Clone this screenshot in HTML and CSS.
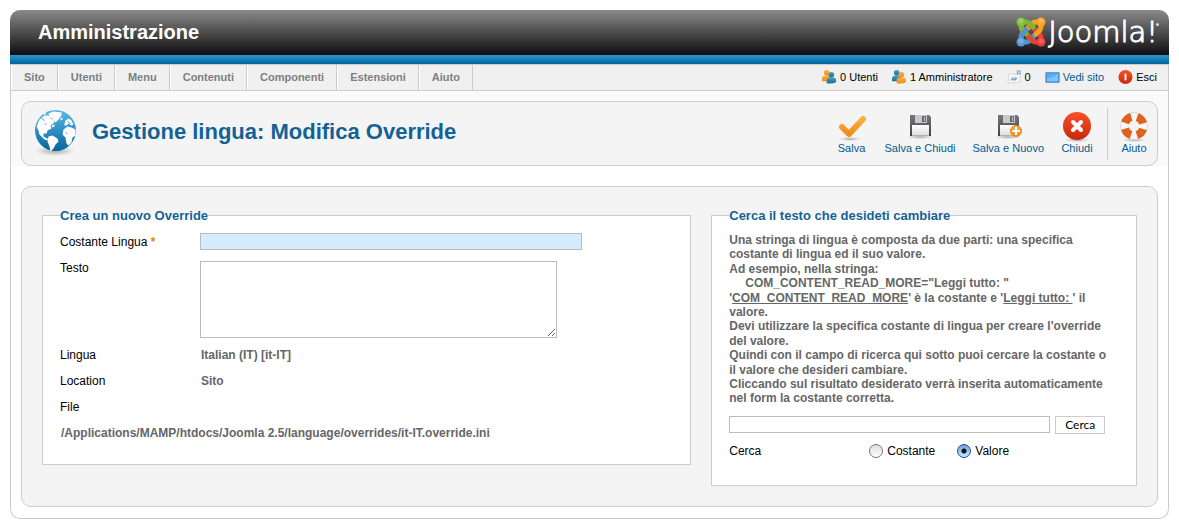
FILE: index.html
```html
<!DOCTYPE html>
<html lang="it">
<head>
<meta charset="utf-8">
<title>Amministrazione - Gestione lingua</title>
<link rel="stylesheet" href="styles.css">
</head>
<body>
<svg class="defs" aria-hidden="true">
  <defs>
    <linearGradient id="sea" x1="0" y1="0" x2="0" y2="1"><stop offset="0" stop-color="#5bb8ea"/><stop offset="1" stop-color="#04659c"/></linearGradient>
    <linearGradient id="gold" x1="0" y1="0" x2="0" y2="1"><stop offset="0" stop-color="#fbb040"/><stop offset="1" stop-color="#f08c1a"/></linearGradient>
    <linearGradient id="teal" x1="0" y1="0" x2="0" y2="1"><stop offset="0" stop-color="#4aa3c4"/><stop offset="1" stop-color="#176a8e"/></linearGradient>
    <linearGradient id="red" x1="0" y1="0" x2="0" y2="1"><stop offset="0" stop-color="#f8502a"/><stop offset="1" stop-color="#c8290c"/></linearGradient>
    <linearGradient id="steel" x1="0" y1="0" x2="0" y2="1"><stop offset="0" stop-color="#77777b"/><stop offset="1" stop-color="#434347"/></linearGradient>
    <linearGradient id="paper" x1="0" y1="0" x2="0" y2="1"><stop offset="0" stop-color="#ffffff"/><stop offset="1" stop-color="#dcdcdc"/></linearGradient>
    <radialGradient id="shade"><stop offset="0" stop-color="#000" stop-opacity=".3"/><stop offset="1" stop-color="#000" stop-opacity="0"/></radialGradient>
    <symbol id="disk" viewBox="0 0 32 32">
      <ellipse cx="16" cy="27" rx="13" ry="2" fill="url(#shade)"/>
      <path d="M6 5h19l2 2v19H6z" fill="url(#steel)"/>
      <path d="M11 5h12v8H11z" fill="#c9c9cb"/>
      <path d="M18 6h4v6h-4z" fill="#6b6b6e"/>
      <path d="M20 7h1v4h-1z" fill="#c5c5c8"/>
      <path d="M8 15h17v11H8z" fill="url(#paper)"/>
      <path d="M8 25h17v1H8z" fill="#b5b5b5"/>
    </symbol>
  </defs>
</svg>
<div class="frame">
  <header class="masthead">
    <h1 class="site-title">Amministrazione</h1>
    <div class="brand">
      <svg class="brand-mark" viewBox="0 0 30 30" aria-hidden="true">
        <g fill="none" stroke-width="5" stroke-linecap="round" stroke-linejoin="round">
          <path d="M5 5V9Q5 12 7 14L16 22" stroke="#7ab929"/>
          <path d="M25 5H20Q17 5 15 8L6 17" stroke="#f9a01e"/>
          <path d="M25 25V21Q25 18 23 16L14 8" stroke="#ee4136"/>
          <path d="M5 25H10Q13 25 15 22L23 14" stroke="#4f93d2"/>
          <path d="M5 24V20Q5 18 7 16L10 13" stroke="#4f93d2"/>
          <path d="M25 6V10Q25 12 23 14L20 17" stroke="#f9a01e"/>
          <path d="M6 5H10Q12 5 14 7L17 10" stroke="#7ab929"/>
          <path d="M24 25H20Q18 25 16 23L13 20" stroke="#ee4136"/>
        </g>
        <circle cx="5" cy="5" r="4.5" fill="#83c03a"/>
        <circle cx="25" cy="5" r="4.5" fill="#fba42a"/>
        <circle cx="25" cy="25" r="4.5" fill="#ee3d36"/>
        <circle cx="5" cy="25" r="4.5" fill="#5a9bd8"/>
        <g fill="#fff" opacity=".2"><circle cx="5" cy="4" r="2.5"/><circle cx="25" cy="4" r="2.5"/><circle cx="25" cy="24" r="2.5"/><circle cx="5" cy="24" r="2.5"/></g>
      </svg>
      <span class="brand-name">Joomla!</span><span class="brand-dot"></span>
    </div>
  </header>
  <div class="menubar">
    <nav class="menu">
      <a href="#">Sito</a><a href="#">Utenti</a><a href="#">Menu</a><a href="#">Contenuti</a><a href="#">Componenti</a><a href="#">Estensioni</a><a href="#">Aiuto</a>
    </nav>
    <div class="status">
      <span class="status-item">
        <svg viewBox="0 0 16 16" aria-hidden="true"><circle cx="5" cy="3" r="3" fill="url(#gold)"/><path d="M0 12V9q0-3 3-3h4q3 0 3 3v3z" fill="url(#gold)"/><circle cx="10" cy="5" r="3" fill="url(#teal)"/><path d="M5 14v-3q0-3 3-3h4q3 0 3 3v2q-4 2-10 1z" fill="url(#teal)"/></svg>
        0 Utenti</span>
      <span class="status-item">
        <svg viewBox="0 0 16 16" aria-hidden="true"><circle cx="5" cy="3" r="3" fill="url(#teal)"/><path d="M0 12V9q0-3 3-3h4q3 0 3 3v3z" fill="url(#teal)"/><circle cx="10" cy="5" r="3" fill="url(#gold)"/><path d="M5 14v-3q0-3 3-3h4q3 0 3 3v2q-4 2-10 1z" fill="url(#gold)"/></svg>
        1 Amministratore</span>
      <span class="status-item">
        <svg viewBox="0 0 16 16" aria-hidden="true"><path d="M2 4l10 1 2-1v9l-13 1z" fill="#f8f8f8" stroke="#d4d4d4"/><path d="M4 8l5-1 2 3-5 2-2-1z" fill="#cfe2ec"/><path d="M4 11q1-3 3-1t4-2M6 8l1 3M9 8v3" fill="none" stroke="#6e9ab3"/><rect x="11" y="1" width="3" height="3" fill="#dcebf2" stroke="#7aa0b5"/></svg>
        0</span>
      <a class="status-item" href="#">
        <svg viewBox="0 0 16 16" aria-hidden="true"><rect x="1" y="3" width="14" height="10" fill="#57aef5" stroke="#3c78ad"/><path d="M2 9q6 0 12-5v8H2z" fill="#7cc4fb"/></svg>
        Vedi sito</a>
      <a class="status-item logout" href="#">
        <svg viewBox="0 0 16 16" aria-hidden="true"><circle cx="8" cy="7.5" r="7.5" fill="url(#red)"/><path d="M8 4v7" stroke="#fff" stroke-width="2"/></svg>
        Esci</a>
    </div>
  </div>
  <div class="toolbar-zone">
    <div class="toolbar">
      <svg class="globe" viewBox="0 0 48 48" aria-hidden="true">
        <ellipse cx="24" cy="41" rx="20" ry="5" fill="url(#shade)"/>
        <g transform="translate(0.5 -1.5)">
          <circle cx="24" cy="22" r="20.5" fill="url(#sea)"/>
          <g fill="#fff">
            <path d="M8 11l5-4 4 0 2 3 3 1 1 3-4 3 1 3-4 2-1 3-3 0 0 3 4 2 1 2-4-1-5-5-1-4-2-4z"/>
            <path d="M17 5l5-2 8 1 0 3-3 4-3 3-3-4-3-1z"/>
            <path d="M17 28l4-1 5 3 1 3-3 3-2 4-3 3-1-5-2-5z"/>
            <path d="M32 21l4-3 4 1 4 2 0 6-3 2-1 5-3 3-2-2-1-6-3-3z"/>
            <path d="M33 15l1-3 3-2 3 2 2 4-2 1-3-2-2 2-2 0z"/>
            <path d="M29 10l2-1 0 2-2 1zM12 5l3-1-1 2-2 0zM20 17l3-1 0 2-2 1z"/>
          </g>
          <path d="M10 10l3 2M13 15l2 1M36 13l3 2M34 24l2 1" stroke="#47a5da" stroke-width="1"/>
        </g>
      </svg>
      <h2 class="page-title">Gestione lingua: Modifica Override</h2>
      <div class="actions">
        <button type="button">
          <svg viewBox="0 0 32 32" aria-hidden="true"><ellipse cx="14" cy="29" rx="11" ry="2" fill="url(#shade)"/><path d="M6 17l7 7L27 9" fill="none" stroke="url(#gold)" stroke-width="6" stroke-linecap="round" stroke-linejoin="round"/></svg>
          Salva</button>
        <button type="button">
          <svg viewBox="0 0 32 32" aria-hidden="true"><use href="#disk"/></svg>
          Salva e Chiudi</button>
        <button type="button">
          <svg viewBox="0 0 32 32" aria-hidden="true"><use href="#disk"/><circle cx="24" cy="21" r="5.5" fill="url(#gold)" stroke="#e9851a"/><path d="M24 17v8M20 21h8" stroke="#fff" stroke-width="2"/></svg>
          Salva e Nuovo</button>
        <button type="button">
          <svg viewBox="0 0 32 32" aria-hidden="true"><ellipse cx="16" cy="30" rx="13" ry="2" fill="url(#shade)"/><circle cx="16" cy="16" r="14" fill="url(#red)"/><path d="M12 12l8 8M20 12l-8 8" stroke="#fff" stroke-width="4" stroke-linecap="round"/></svg>
          Chiudi</button>
        <button type="button" class="help">
          <svg viewBox="0 0 32 32" aria-hidden="true"><ellipse cx="16" cy="30" rx="12" ry="2" fill="url(#shade)"/><circle cx="16" cy="16" r="9.5" fill="none" stroke="#f6f6f6" stroke-width="8"/><circle cx="16" cy="16" r="13.5" fill="none" stroke="#d8d8d8"/><circle cx="16" cy="16" r="9.5" fill="none" stroke="#e2601f" stroke-width="8" stroke-dasharray="8.9 6" stroke-dashoffset="-3"/></svg>
          Aiuto</button>
      </div>
    </div>
  </div>
  <main class="content">
    <form class="panel">
      <fieldset>
        <legend>Crea un nuovo Override</legend>
        <div class="rows">
          <div class="row row-key"><label for="key">Costante Lingua<span class="star"> *</span></label><input id="key" class="key" type="text"></div>
          <div class="row row-text"><label for="text">Testo</label><textarea id="text"></textarea></div>
          <div class="row"><span class="name">Lingua</span><span class="value">Italian (IT) [it-IT]</span></div>
          <div class="row"><span class="name">Location</span><span class="value">Sito</span></div>
          <div class="row"><span class="name">File</span></div>
          <div class="row"><span class="value">/Applications/MAMP/htdocs/Joomla 2.5/language/overrides/it-IT.override.ini</span></div>
        </div>
      </fieldset>
      <fieldset>
        <legend>Cerca il testo che desideti cambiare</legend>
        <div class="search">
          <p class="hint">Una stringa di lingua è composta da due parti: una specifica costante di lingua ed il suo valore.<br>
          Ad esempio, nella stringa:<br>
          <span class="sample">COM_CONTENT_READ_MORE="Leggi tutto: "</span><br>
          '<u>COM_CONTENT_READ_MORE</u>' è la costante e '<u>Leggi tutto: </u>' il valore.<br>
          Devi utilizzare la specifica costante di lingua per creare l'override del valore.<br>
          Quindi con il campo di ricerca qui sotto puoi cercare la costante o il valore che desideri cambiare.<br>
          Cliccando sul risultato desiderato verrà inserita automaticamente nel form la costante corretta.</p>
          <div class="query"><input type="text" aria-label="Testo da cercare"><button type="button">Cerca</button></div>
          <div class="scope" role="radiogroup" aria-labelledby="scope-name">
            <span class="name" id="scope-name">Cerca</span>
            <label><input type="radio" name="scope">Costante</label>
            <label><input type="radio" name="scope" checked>Valore</label>
          </div>
        </div>
      </fieldset>
    </form>
  </main>
</div>
</body>
</html>
```
FILE: styles.css
```css
* { box-sizing: border-box; }

body {
  margin: 0;
  padding: 10px;
  background: #fff;
  color: #000;
  font-family: "Liberation Sans", Arial, sans-serif;
  font-size: 12px;
  line-height: 18px;
}

.defs { position: absolute; width: 0; height: 0; }

h1, h2, p { margin: 0; }
a { color: inherit; text-decoration: none; }
button, input, textarea { font: inherit; }

.frame {
  border: 1px solid #ccc;
  border-top: 0;
  border-radius: 10px;
}

/* Header */
.masthead {
  display: flex;
  align-items: center;
  justify-content: space-between;
  height: 54px;
  margin: 0 -1px;
  padding: 0 10px 10px 28px;
  border-radius: 10px 10px 0 0;
  background:
    linear-gradient(#2b97cc, #00649b) bottom / 100% 9px no-repeat,
    linear-gradient(#8a8a8a, #0e0e0e) top / 100% 45px no-repeat;
  color: #fff;
}
.site-title { font-size: 20px; line-height: 24px; }
.brand { display: flex; align-items: center; }
.brand-mark { width: 30px; height: 30px; margin-right: 2px; }
.brand-name {
  font-family: "DejaVu Sans Light", "DejaVu Sans", sans-serif;
  font-size: 29px;
  font-weight: 200;
  line-height: 32px;
  -webkit-text-stroke: 1px #fff;
}
.brand-dot {
  width: 3px;
  height: 3px;
  margin: 0 0 16px -2px;
  border-radius: 50%;
  background: #ddd;
}

/* Menu and status */
.menubar {
  display: flex;
  justify-content: space-between;
  height: 27px;
  border-top: 1px solid #ccc;
  border-bottom: 1px solid #ccc;
  background: #f0f0f0;
  font-size: 11px;
  line-height: 25px;
}
.menu { display: flex; }
.menu a {
  padding: 0 12px;
  border-left: 1px solid #fff;
  border-right: 1px solid #ccc;
  color: #7f7f7f;
  font-weight: bold;
}
.status { display: flex; gap: 14px; padding-right: 11px; }
.status-item { display: flex; align-items: center; gap: 3px; }
.status-item svg { width: 15px; height: 15px; }
a.status-item { color: #025a8d; }
a.logout { color: #000; }

/* Toolbar */
.toolbar-zone { padding: 10px 10px 0; background: #fafafa; }
.toolbar {
  display: flex;
  align-items: center;
  height: 65px;
  padding: 0 7px 0 9px;
  border: 1px solid #ccc;
  border-radius: 10px;
  background: #f4f4f4;
}
.globe { width: 48px; height: 48px; }
.page-title {
  flex: 1;
  padding: 0 0 4px 13px;
  color: #146295;
  font-size: 22px;
  line-height: 26px;
}
.actions { display: flex; gap: 17px; }
.actions button {
  display: flex;
  flex-direction: column;
  align-items: center;
  min-width: 32px;
  padding: 2px 0 5px;
  border: 0;
  background: none;
  color: #025a8d;
  font-size: 11px;
  line-height: 13px;
}
.actions svg { width: 32px; height: 32px; }
.actions .help {
  margin-left: -3px;
  padding-left: 10px;
  border-left: 1px solid #ccc;
}

/* Panel */
.content { padding: 20px 10px 11px; }
.panel {
  display: grid;
  grid-template-columns: minmax(0, 61fr) minmax(0, 40fr);
  align-items: start;
  gap: 20px;
  padding: 20px;
  border: 1px solid #ccc;
  border-radius: 10px;
  background: #f4f4f4;
}
fieldset {
  min-width: 0;
  margin: 0;
  padding: 9px 17px 22px;
  border: 1px solid #ccc;
  background: #fff;
}
legend {
  padding: 0;
  color: #146295;
  font-size: 13px;
  font-weight: bold;
  line-height: 17px;
}
.rows { display: flex; flex-direction: column; gap: 8px; }
.row { display: flex; align-items: flex-start; min-height: 18px; }
.row-key { min-height: 20px; }
.row-text { line-height: 14px; }
.row label, .row .name { flex: 0 0 140px; }
.row textarea, .key, .query input {
  margin: 0;
  padding: 0 2px;
  border: 1px solid #bbb;
  background: #fff;
}
.key { width: 382px; height: 17px; }
.row .key { background: #d5ebff; }
.row textarea { width: 357px; height: 77px; }
.star { color: #ee7f00; font-weight: bold; line-height: 1; }
.value { padding-left: 1px; color: #666; font-weight: bold; }

/* Search */
.search { padding: 0 4px 3px 0; }
.hint { color: #666; font-weight: bold; line-height: 1.2; }
.sample { padding-left: 16px; }
.query { display: flex; align-items: flex-start; gap: 5px; margin-top: 10px; }
.query input { flex: 0 1 321px; min-width: 0; height: 17px; }
.query button {
  width: 50px;
  height: 18px;
  padding: 0;
  border: 1px solid #ccc;
  background: #fff;
  font-family: Lato, sans-serif;
  line-height: 16px;
}
.scope { display: flex; margin-top: 8px; }
.scope .name { flex: 0 0 140px; }
.scope label { display: flex; align-items: center; gap: 4px; margin-right: 22px; }
.scope input {
  appearance: none;
  width: 14px;
  height: 14px;
  margin: 0;
  border: 1px solid #777;
  border-radius: 50%;
  background: linear-gradient(#ddd, #fff);
}
.scope input:checked {
  border-color: #2b4a9a;
  background: radial-gradient(circle, #111 0 2px, transparent 3px), linear-gradient(#6d9fe2, #c4eaff);
}
```
